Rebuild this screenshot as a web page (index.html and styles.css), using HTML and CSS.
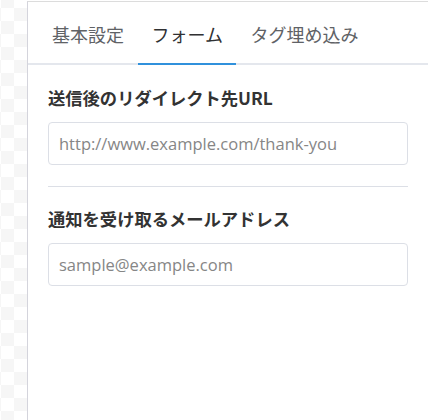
FILE: index.html
```html
<!DOCTYPE html>
<html lang="ja">
<head>
<meta charset="utf-8">
<link rel="stylesheet" href="styles.css">
</head>
<body>
<div class="page">
  <div class="strip"></div>
  <div class="panel">
    <div class="tabs">
      <div class="tab">基本設定</div>
      <div class="tab active">フォーム</div>
      <div class="tab">タグ埋め込み</div>
    </div>
    <div class="content">
      <div class="field">
        <label class="label">送信後のリダイレクト先URL</label>
        <input class="input" type="text" placeholder="http://www.example.com/thank-you">
      </div>
      <hr class="divider">
      <div class="field">
        <label class="label">通知を受け取るメールアドレス</label>
        <input class="input" type="text" placeholder="sample@example.com">
      </div>
    </div>
  </div>
</div>
</body>
</html>
```
FILE: styles.css
```css
html, body {
  margin: 0;
  padding: 0;
  background: #fff;
}
.page {
  display: flex;
  width: 428px;
  height: 420px;
  font-family: "Open Sans", "Noto Sans CJK JP", sans-serif;
}
.strip {
  width: 27px;
  flex: none;
  background-color: #fff;
  background-image: conic-gradient(#f6f6f6 25%, #fff 0 50%, #f6f6f6 0 75%, #fff 0);
  background-size: 26px 26px;
  background-position: 1px 8px;
}
.panel {
  flex: 1;
  margin-top: 1px;
  border-top: 1px solid #dcdcdc;
  border-left: 1px solid #d4d4dc;
}
.tabs {
  display: flex;
  padding-left: 10px;
  border-bottom: 2px solid #e4e7ed;
}
.tab {
  padding: 4px 13.5px 0 14px;
  height: 57px;
  line-height: 57px;
  font-family: "Noto Sans CJK JP", sans-serif;
  font-size: 18px;
  color: #606266;
  margin-bottom: -2px;
  border-bottom: 2px solid transparent;
}
.tab.active {
  color: #303133;
  border-bottom-color: #3091dc;
}
.content {
  padding: 20px 20px 0 20px;
}
.field {
  display: flex;
  flex-direction: column;
}
.label {
  font-family: "Noto Sans CJK JP", sans-serif;
  font-weight: bold;
  font-size: 17.3px;
  line-height: 26px;
  color: #333;
  margin-bottom: 11px;
}
.input {
  box-sizing: border-box;
  height: 43px;
  border: 1px solid #dcdfe6;
  border-radius: 4px;
  padding: 0 10px;
  font-family: "Open Sans", sans-serif;
  font-size: 16.5px;
  color: #333;
  outline: none;
}
.input::placeholder {
  color: #868686;
}
.divider {
  border: 0;
  border-top: 1px solid #dcdfe6;
  margin: 21px 0 19px 0;
}
```
